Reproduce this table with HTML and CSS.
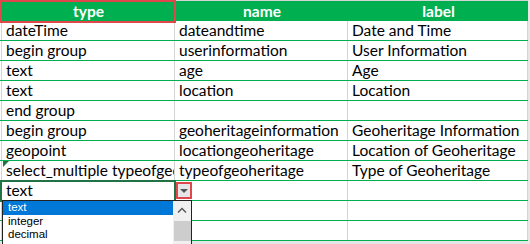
FILE: index.html
```html
<!DOCTYPE html>
<html lang="en">
<head>
    <meta charset="UTF-8">
    <title>XLSForm survey sheet</title>
    <link rel="stylesheet" href="styles.css">
</head>
<body>
    <div class="sheet">
        <div class="row head">
            <div class="cell">type</div>
            <div class="cell">name</div>
            <div class="cell">label</div>
        </div>
        <div class="row">
            <div class="cell">dateTime</div>
            <div class="cell">dateandtime</div>
            <div class="cell">Date and Time</div>
        </div>
        <div class="row">
            <div class="cell">begin group</div>
            <div class="cell">userinformation</div>
            <div class="cell">User Information</div>
        </div>
        <div class="row">
            <div class="cell">text</div>
            <div class="cell">age</div>
            <div class="cell">Age</div>
        </div>
        <div class="row">
            <div class="cell">text</div>
            <div class="cell">location</div>
            <div class="cell">Location</div>
        </div>
        <div class="row">
            <div class="cell">end group</div>
            <div class="cell"></div>
            <div class="cell"></div>
        </div>
        <div class="row">
            <div class="cell">begin group</div>
            <div class="cell">geoheritageinformation</div>
            <div class="cell">Geoheritage Information</div>
        </div>
        <div class="row">
            <div class="cell">geopoint</div>
            <div class="cell">locationgeoheritage</div>
            <div class="cell">Location of Geoheritage</div>
        </div>
        <div class="row">
            <div class="cell">select_multiple typeofgeoheritage</div>
            <div class="cell">typeofgeoheritage</div>
            <div class="cell">Type of Geoheritage</div>
        </div>
        <div class="row">
            <div class="cell">text</div>
            <div class="cell"></div>
            <div class="cell"></div>
        </div>
        <div class="row">
            <div class="cell"></div>
            <div class="cell"></div>
            <div class="cell"></div>
        </div>
        <div class="row">
            <div class="cell"></div>
            <div class="cell"></div>
            <div class="cell"></div>
        </div>

        <div class="mark-head"></div>
        <div class="error-flag"></div>
        <div class="active-cell"></div>
        <div class="drop-btn"><span class="arrow"></span></div>
        <div class="drop-list">
            <div class="items">
                <div class="item selected">text</div>
                <div class="item">integer</div>
                <div class="item">decimal</div>
            </div>
            <div class="scroll">
                <svg class="up" width="10" height="6" viewBox="0 0 10 6">
                    <path d="M1 5.5 L5 1.5 L9 5.5" fill="none" stroke="#555" stroke-width="1.4"/>
                </svg>
                <div class="thumb"></div>
            </div>
        </div>
    </div>
</body>
</html>
```

FILE: styles.css
```css
html, body {
    margin: 0;
    height: 100%;
    background: #e6e6e6;
    overflow: hidden;
}
.sheet {
    position: relative;
    width: 528px;
    background: white;
    border-top: 1px solid #d4d4d4;
    font-family: 'Lato', 'Liberation Sans', sans-serif;
    font-size: 15.5px;
    color: #000;
}
.row {
    display: grid;
    grid-template-columns: 175px 173px 180px;
    height: 20px;
    box-sizing: border-box;
    border-bottom: 1px solid #00b050;
}
.cell {
    box-sizing: border-box;
    border-right: 1px solid #d4d4d4;
    padding: 0 3px 0 4px;
    line-height: 19px;
    white-space: nowrap;
    overflow: hidden;
}
.row .cell:first-child {
    border-left: 1px solid #d4d4d4;
    margin-left: 1px;
}
.row.head {
    background: #00b050;
    border-bottom: none;
}
.row.head .cell {
    border: none;
    color: white;
    font-weight: bold;
    text-align: center;
    line-height: 20px;
}
.mark-head {
    position: absolute;
    left: 0;
    top: -1px;
    width: 176px;
    height: 23px;
    box-sizing: border-box;
    border: 2px solid #e0474c;
}
.error-flag {
    position: absolute;
    left: 3px;
    top: 160px;
    width: 0;
    height: 0;
    border-top: 6px solid #217346;
    border-right: 6px solid transparent;
}
.active-cell {
    position: absolute;
    left: 0;
    top: 179px;
    width: 176px;
    height: 22px;
    box-sizing: border-box;
    border: 2px solid #217346;
}
.drop-btn {
    position: absolute;
    left: 176px;
    top: 181px;
    width: 16px;
    height: 17px;
    box-sizing: border-box;
    border: 2px solid #e0474c;
    background: #e6e6e6;
    display: flex;
    align-items: center;
    justify-content: center;
}
.arrow {
    width: 0;
    height: 0;
    border-left: 4px solid transparent;
    border-right: 4px solid transparent;
    border-top: 4px solid #555;
}
.drop-list {
    position: absolute;
    left: 2px;
    top: 199px;
    width: 190px;
    height: 60px;
    box-sizing: border-box;
    border: 1px solid #222;
    background: white;
    display: flex;
    font-family: 'Liberation Sans', sans-serif;
    font-size: 11.5px;
}
.items {
    flex: 1;
}
.item {
    height: 13.5px;
    line-height: 13.5px;
    padding-left: 5px;
}
.item.selected {
    background: #0078d7;
    color: white;
}
.scroll {
    width: 18px;
    background: #f0f0f0;
    display: flex;
    flex-direction: column;
    align-items: center;
}
.up {
    margin-top: 6px;
}
.thumb {
    margin-top: 8px;
    width: 17px;
    height: 20px;
    background: #cdcdcd;
}
```
